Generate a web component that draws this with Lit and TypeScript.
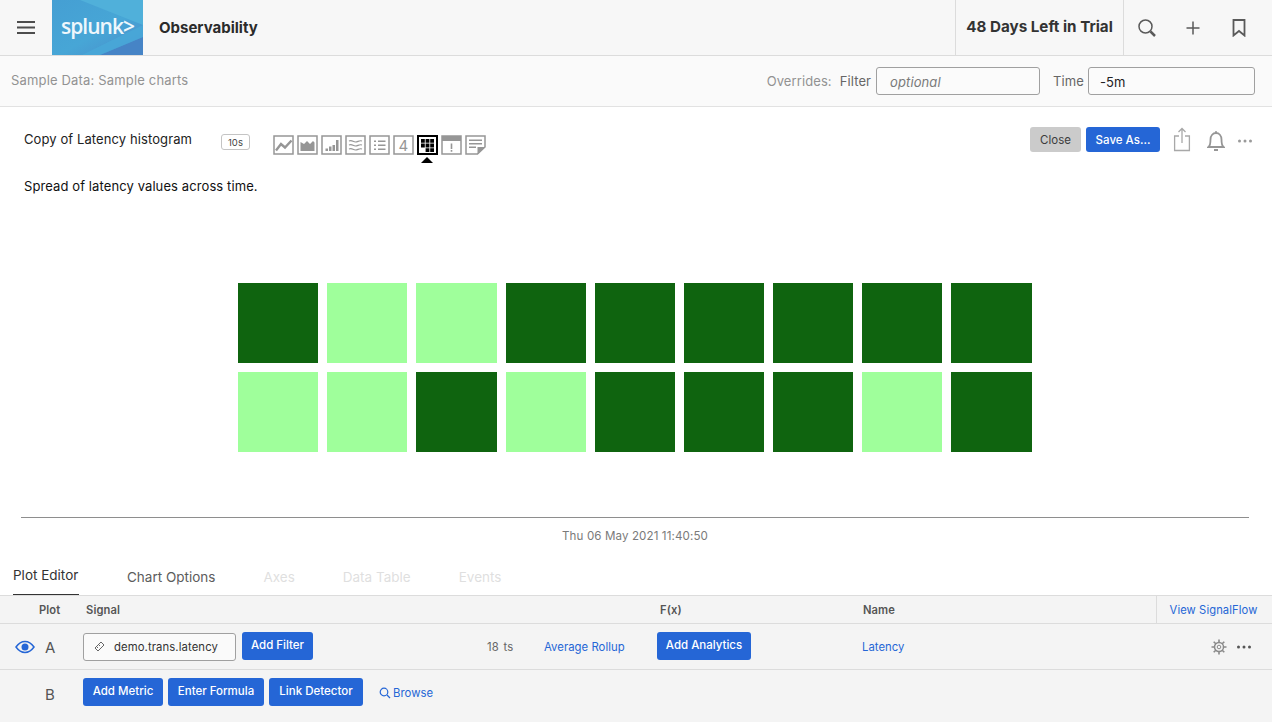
import { LitElement, html, css, svg } from 'lit';
import { customElement } from 'lit/decorators.js';

const CELLS = [1, 0, 0, 1, 1, 1, 1, 1, 1, 0, 0, 1, 0, 1, 1, 1, 0, 1];
const GREY = '#969696';

const CHART_ICONS = [
  svg`<path d="M3 15.500l5-6.500 4 3.500 6.500-7" fill="none" stroke=${GREY} stroke-width="2.400"/>`,
  svg`<path d="M3.500 16V7l3.500 2 3-3 3 3 3-3 1.500 1.500V16z" fill=${GREY}/>`,
  svg`<path d="M4.500 16v-2.500H7V16zM8 16v-4.500h2.500V16zM11.500 16v-6H14v6zM15 16V5h2.500v11z" fill=${GREY}/>`,
  svg`<path d="M4 6c3-1.500 4 1 6.500 1S14 5 17 6M4 10c3-1.500 4 1 6.500 1S14 9 17 10M4 14c3-1.500 4 1 6.500 1s3.500-2 6.500-1" fill="none" stroke=${GREY} stroke-width="1.200"/>`,
  svg`<path d="M5 5.500h2V7H5zM9 5.500h7.500V7H9zM5 9.500h2V11H5zM9 9.500h7.500V11H9zM5 13.500h2V15H5zM9 13.500h7.500V15H9z" fill=${GREY}/>`,
];

@customElement('app-root')
export class AppRoot extends LitElement {
  static styles = css`
    :host {
      display: block;
      height: 722px;
      overflow: hidden;
      background: #fff;
      font-family: Inter, 'Noto Sans', sans-serif;
      letter-spacing: 0.1px;
      color: #333;
    }
    svg { display: block; }

    .topbar {
      display: flex;
      align-items: stretch;
      height: 55px;
      background: #f7f7f7;
      border-bottom: 1px solid #dcdcdc;
    }
    .burger {
      width: 52px;
      display: flex;
      align-items: center;
      justify-content: center;
    }
    .logo {
      width: 91px;
      background: linear-gradient(150deg, #459fd3 0%, #47a6d6 55%, #4a8bca 100%);
      position: relative;
      overflow: hidden;
      display: flex;
      align-items: center;
      justify-content: center;
    }
    .logo-shape { position: absolute; inset: 0; }
    .logo-text {
      position: relative;
      color: #eef7fc;
      font-family: 'Open Sans', sans-serif;
      font-size: 21px;
      font-weight: 600;
      letter-spacing: -1px;
      margin-top: -3px;
    }
    .product {
      margin-left: 16px;
      align-self: center;
      font-size: 15px;
      font-weight: 700;
      letter-spacing: 0;
      color: #2b2b2b;
    }
    .spacer { flex: 1; }
    .trial {
      width: 169px;
      box-sizing: border-box;
      border-left: 1px solid #dcdcdc;
      border-right: 1px solid #dcdcdc;
      display: flex;
      align-items: center;
      justify-content: center;
      font-size: 15.200px;
      font-weight: 700;
      letter-spacing: 0;
      color: #333;
      padding-bottom: 2px;
    }
    .top-actions {
      width: 148px;
      display: flex;
      align-items: center;
      padding-left: 13px;
      box-sizing: border-box;
    }

    .subbar {
      display: flex;
      align-items: center;
      height: 50px;
      background: #fafafa;
      border-bottom: 1px solid #e2e2e2;
      padding: 0 17px 0 11px;
      font-size: 13px;
    }
    .crumb { color: #929292; flex: 1; margin-top: -2px; letter-spacing: 0.17px; }
    .ov { color: #929292; margin-right: 8px; }
    .lbl { color: #666; margin-right: 5px; }
    .lbl.t { margin-right: 4px; }
    .field {
      height: 28px;
      box-sizing: border-box;
      border: 1px solid #a0a0a0;
      border-radius: 3px;
      display: flex;
      align-items: center;
      padding: 1px 0 0 13px;
      font-size: 13px;
      background: #fbfbfb;
    }
    .field.filter { width: 164px; margin-right: 13px; font-style: italic; color: #7a7a7a; }
    .field.time { width: 167px; color: #222; padding-left: 11px; }

    .chart {
      height: 456px;
      display: flex;
      flex-direction: column;
      background: #fff;
    }
    .chart-head {
      display: flex;
      align-items: flex-start;
      padding: 24px 19px 0 24px;
      height: 31px;
    }
    .chart-title {
      font-size: 13px;
      color: #222;
      width: 197px;
    }
    .res {
      width: 29px;
      height: 16px;
      box-sizing: border-box;
      margin-top: 3px;
      border: 1px solid #c4c4c4;
      border-radius: 3px;
      font-size: 9.500px;
      color: #444;
      display: flex;
      align-items: center;
      justify-content: center;
    }
    .types {
      display: flex;
      gap: 3px;
      margin-left: 23px;
      margin-top: 4px;
    }
    .type {
      position: relative;
      width: 21px;
      height: 20px;
    }
    .type.on::after {
      content: '';
      position: absolute;
      left: 4px;
      top: 22px;
      border-left: 6px solid transparent;
      border-right: 6px solid transparent;
      border-bottom: 6px solid #000;
    }
    .head-actions {
      margin-left: auto;
      display: flex;
      align-items: center;
      margin-top: -4px;
    }
    .btn {
      height: 28px;
      box-sizing: border-box;
      border-radius: 3px;
      background: #2566d6;
      color: #fff;
      font-size: 11.500px;
      font-weight: 500;
      letter-spacing: 0;
      display: flex;
      align-items: center;
      justify-content: center;
      padding-bottom: 2px;
    }
    .btn.small { height: 25px; padding-bottom: 0; font-size: 11.500px; }
    .btn.grey { background: #cbcbcb; color: #3c3c3c; font-weight: 400; }
    .desc {
      margin-top: 16px;
      padding-left: 24px;
      font-size: 13px;
      color: #111;
    }
    .heatmap {
      display: grid;
      grid-template-columns: repeat(9, 1fr);
      grid-auto-rows: 80px;
      gap: 9px;
      width: 793.600px;
      margin: 89px 0 0 238px;
    }
    .cell { background: #9fff9b; }
    .cell.dark { background: #0f640f; }
    .axis {
      margin: 65px 23px 0 21px;
      border-top: 1px solid #8e8e8e;
      text-align: center;
      padding-top: 11px;
      font-size: 11.600px;
      color: #7a7a7a;
    }

    .tabs {
      display: flex;
      height: 32px;
      gap: 48px;
      padding-left: 13px;
      background: #fff;
      font-size: 13.500px;
      letter-spacing: 0;
      align-items: stretch;
    }
    .tab { color: #5c5c5c; margin-top: 6px; }
    .tab.sel {
      color: #333;
      margin-top: 4px;
      width: 66px;
      height: 27px;
      white-space: nowrap;
      border-bottom: 1px solid #333;
    }
    .tab.off { color: #dfdfdf; }

    .grid {
      background: #f4f4f4;
      border-top: 1px solid #dcdcdc;
    }
    .thead {
      display: flex;
      align-items: center;
      height: 28px;
      box-sizing: border-box;
      font-size: 11.200px;
      font-weight: 600;
      color: #555;
      border-bottom: 1px solid #dcdcdc;
    }
    .plot-col { width: 86px; padding-left: 39px; box-sizing: border-box; }
    .signal-col { width: 574px; }
    .fx { width: 203px; }
    .name-col { flex: 1; }
    .view-flow {
      align-self: stretch;
      width: 116px;
      box-sizing: border-box;
      border-left: 1px solid #dcdcdc;
      color: #2566d6;
      font-weight: 400;
      display: flex;
      align-items: center;
      justify-content: center;
      padding-right: 2px;
    }
    .row {
      display: flex;
      align-items: center;
      font-size: 11.300px;
      border-bottom: 1px solid #dcdcdc;
      height: 46px;
      box-sizing: border-box;
    }
    .row.b { border-bottom: 0; height: 52px; padding-bottom: 6px; }
    .eye { width: 45px; display: flex; justify-content: flex-end; padding-right: 10px; box-sizing: border-box; }
    .letter { width: 38px; font-size: 15px; color: #555; padding-top: 2px; box-sizing: border-box; }
    .row.b .letter { padding-left: 45px; width: 83px; }
    .metric {
      width: 153px;
      height: 28px;
      box-sizing: border-box;
      border: 1px solid #a0a0a0;
      border-radius: 3px;
      background: #fafafa;
      display: flex;
      align-items: center;
      padding-left: 10px;
      gap: 9px;
      color: #333;
      margin-right: 6px;
    }
    .row .btn { margin-top: -2px; }
    .ts { margin-left: 174px; width: 57px; color: #666; word-spacing: 1.500px; }
    .link { color: #2566d6; letter-spacing: 0.05px; }
    .rollup { width: 113px; }
    .name-val { margin-left: 111px; flex: 1; }
    .row-actions {
      display: flex;
      align-items: center;
      gap: 9px;
      padding-right: 20px;
    }
    .row-b-btns { display: flex; gap: 5px; }
    .browse {
      display: flex;
      align-items: center;
      gap: 2px;
      margin-left: 16px;
    }
  `;

  private typeIcon(inner: unknown, on = false) {
    const box = on ? '#000' : GREY;
    return html`<div class="type ${on ? 'on' : ''}">
      <svg width="21" height="20" viewBox="0 0 21 20">
        <rect x="1" y="1" width="19" height="18" fill="#fff" stroke=${box} stroke-width=${on ? 2 : 1.5}></rect>
        ${inner}
      </svg>
    </div>`;
  }

  private dots(color: string) {
    return html`<svg width="16" height="4" viewBox="0 0 16 4" fill=${color}>
      <circle cx="2.500" cy="2" r="1.500"></circle><circle cx="8" cy="2" r="1.500"></circle><circle cx="13.500" cy="2" r="1.500"></circle>
    </svg>`;
  }

  render() {
    return html`
      <div class="topbar">
        <div class="burger">
          <svg width="18" height="13" viewBox="0 0 18 13" fill="#4d4d4d">
            <rect y="0" width="18" height="2"></rect><rect y="5.500" width="18" height="2"></rect><rect y="11" width="18" height="2"></rect>
          </svg>
        </div>
        <div class="logo">
          <svg class="logo-shape" width="91" height="55" viewBox="0 0 91 55">
            <path d="M28 0h63v25z" fill="#50b0da"></path>
            <path d="M91 37L48 55h43z" fill="#4684c6"></path>
            <path d="M91 25v12L48 55H30z" fill="#49a9d8" opacity=".8"></path>
          </svg>
          <span class="logo-text">splunk&gt;</span>
        </div>
        <div class="product">Observability</div>
        <div class="spacer"></div>
        <div class="trial">48 Days Left in Trial</div>
        <div class="top-actions">
          <svg width="20" height="20" viewBox="0 0 20 20" fill="none" stroke="#5a5a5a">
            <circle cx="8.500" cy="8.500" r="6.500" stroke-width="1.500"></circle>
            <path d="M13.500 13.500L18 18" stroke-width="2.500"></path>
          </svg>
          <svg width="16" height="16" viewBox="0 0 16 16" stroke="#5a5a5a" stroke-width="1.500" style="margin-left:28px">
            <path d="M8 1.500v13M1.500 8h13"></path>
          </svg>
          <svg width="14" height="18" viewBox="0 0 14 18" fill="none" stroke="#5a5a5a" stroke-width="1.800" style="margin-left:31px">
            <path d="M1.500 1h11v15.500L7 12l-5.500 4.500z"></path>
          </svg>
        </div>
      </div>

      <div class="subbar">
        <div class="crumb">Sample Data: Sample charts</div>
        <span class="ov">Overrides:</span>
        <span class="lbl">Filter</span>
        <div class="field filter">optional</div>
        <span class="lbl t">Time</span>
        <div class="field time">-5m</div>
      </div>

      <div class="chart">
        <div class="chart-head">
          <div class="chart-title">Copy of Latency histogram</div>
          <div class="res">10s</div>
          <div class="types">
            ${CHART_ICONS.map((i) => this.typeIcon(i))}
            <div class="type">
              <svg width="21" height="20" viewBox="0 0 21 20">
                <rect x="1" y="1" width="19" height="18" fill="#fff" stroke=${GREY} stroke-width="1.500"></rect>
                <text x="10.500" y="15.500" text-anchor="middle" font-size="15" fill=${GREY} font-family="Inter, sans-serif">4</text>
              </svg>
            </div>
            ${this.typeIcon(
              svg`<path d="M4 4h3.800v3.800H4zM8.600 4h3.800v3.800H8.600zM13.200 4H17v3.800h-3.800zM4 8.600h3.800v3.800H4zM8.600 8.600h3.800v3.800H8.600zM13.200 8.600H17v3.800h-3.800zM8.600 13.200h3.800V17H8.600zM13.200 13.200H17V17h-3.800z" fill="#000"/>`,
              true
            )}
            ${this.typeIcon(
              svg`<rect x="1" y="1" width="19" height="5" fill=${GREY}/><path d="M9.700 8.500h1.600v5.500H9.700zM9.700 15h1.600v1.800H9.700z" fill=${GREY}/>`
            )}
            <div class="type">
              <svg width="21" height="20" viewBox="0 0 21 20">
                <path d="M1 1h19v11l-7.500 7H1z" fill="#fff" stroke=${GREY} stroke-width="1.500"></path>
                <path d="M12.500 19v-7H20z" fill=${GREY}></path>
                <path d="M4 4.500h13v1.500H4zM4 8h13v1.500H4zM4 11.500h7V13H4z" fill=${GREY}></path>
              </svg>
            </div>
          </div>
          <div class="head-actions">
            <div class="btn small grey" style="width:51px">Close</div>
            <div class="btn small" style="width:74px;margin-left:5px">Save As...</div>
            <svg width="18" height="25" viewBox="0 0 18 25" fill="none" stroke="#a8a8a8" stroke-width="1.300" style="margin-left:13px">
              <path d="M6 9H1.600v14.500h14.800V9H12M9 16V1.500M5.500 5L9 1.500 12.500 5"></path>
            </svg>
            <svg width="18" height="22" viewBox="0 0 18 22" fill="none" stroke="#969696" stroke-width="1.800" style="margin-left:16px;margin-top:3px">
              <path d="M1.500 17c1.800-1.500 2-3 2-7.500C3.500 5.500 6 3 9 3s5.500 2.500 5.500 6.500c0 4.500.2 6 2 7.500z"></path>
              <path d="M9 1v2" stroke-width="1.500"></path>
              <path d="M7 20h4" stroke-width="2"></path>
            </svg>
            <div style="margin-left:12px;margin-top:3px">${this.dots('#9a9a9a')}</div>
          </div>
        </div>
        <div class="desc">Spread of latency values across time.</div>
        <div class="heatmap">
          ${CELLS.map((c) => html`<div class="cell ${c ? 'dark' : ''}"></div>`)}
        </div>
        <div class="axis">Thu 06 May 2021 11:40:50</div>
      </div>

      <div class="tabs">
        <div class="tab sel">Plot Editor</div>
        <div class="tab">Chart Options</div>
        <div class="tab off">Axes</div>
        <div class="tab off">Data Table</div>
        <div class="tab off">Events</div>
      </div>

      <div class="grid">
        <div class="thead">
          <div class="plot-col">Plot</div>
          <div class="signal-col">Signal</div>
          <div class="fx">F(x)</div>
          <div class="name-col">Name</div>
          <div class="view-flow">View SignalFlow</div>
        </div>
        <div class="row">
          <div class="eye">
            <svg width="20" height="14" viewBox="0 0 20 14" fill="none" stroke="#2566d6">
              <path d="M1 7c2.500-3.500 5.500-5.500 9-5.500s6.500 2 9 5.500c-2.500 3.500-5.500 5.500-9 5.500S3.500 10.500 1 7z" stroke-width="1.500"></path>
              <circle cx="10" cy="7" r="3.500" fill="#2566d6" stroke="none"></circle>
            </svg>
          </div>
          <div class="letter">A</div>
          <div class="metric">
            <svg width="11" height="11" viewBox="0 0 11 11" fill="none" stroke="#666">
              <path d="M1 7l6-6 3 3-6 6zM3 6l1 1M5 4l1 1"></path>
            </svg>
            demo.trans.latency
          </div>
          <div class="btn" style="width:71px">Add Filter</div>
          <div class="ts">18 ts</div>
          <div class="link rollup">Average Rollup</div>
          <div class="btn" style="width:94px">Add Analytics</div>
          <div class="link name-val">Latency</div>
          <div class="row-actions">
            <svg width="16" height="16" viewBox="0 0 16 16" fill="none" stroke="#8a8a8a">
              <circle cx="8" cy="8" r="4.500" stroke-width="1.500"></circle>
              <circle cx="8" cy="8" r="1.800"></circle>
              <path d="M8 0.500v3M8 12.500v3M0.500 8h3M12.500 8h3M2.700 2.700l2.100 2.100M11.200 11.200l2.100 2.100M2.700 13.300l2.100-2.100M11.200 4.800l2.100-2.100" stroke-width="1.600"></path>
            </svg>
            ${this.dots('#555')}
          </div>
        </div>
        <div class="row b">
          <div class="letter">B</div>
          <div class="row-b-btns">
            <div class="btn" style="width:80px">Add Metric</div>
            <div class="btn" style="width:96px">Enter Formula</div>
            <div class="btn" style="width:94px">Link Detector</div>
          </div>
          <div class="link browse">
            <svg width="12" height="12" viewBox="0 0 12 12" fill="none" stroke="#2566d6" stroke-width="1.200">
              <circle cx="5" cy="5" r="3.800"></circle><path d="M8 8l3 3"></path>
            </svg>
            Browse
          </div>
        </div>
      </div>
    `;
  }
}
